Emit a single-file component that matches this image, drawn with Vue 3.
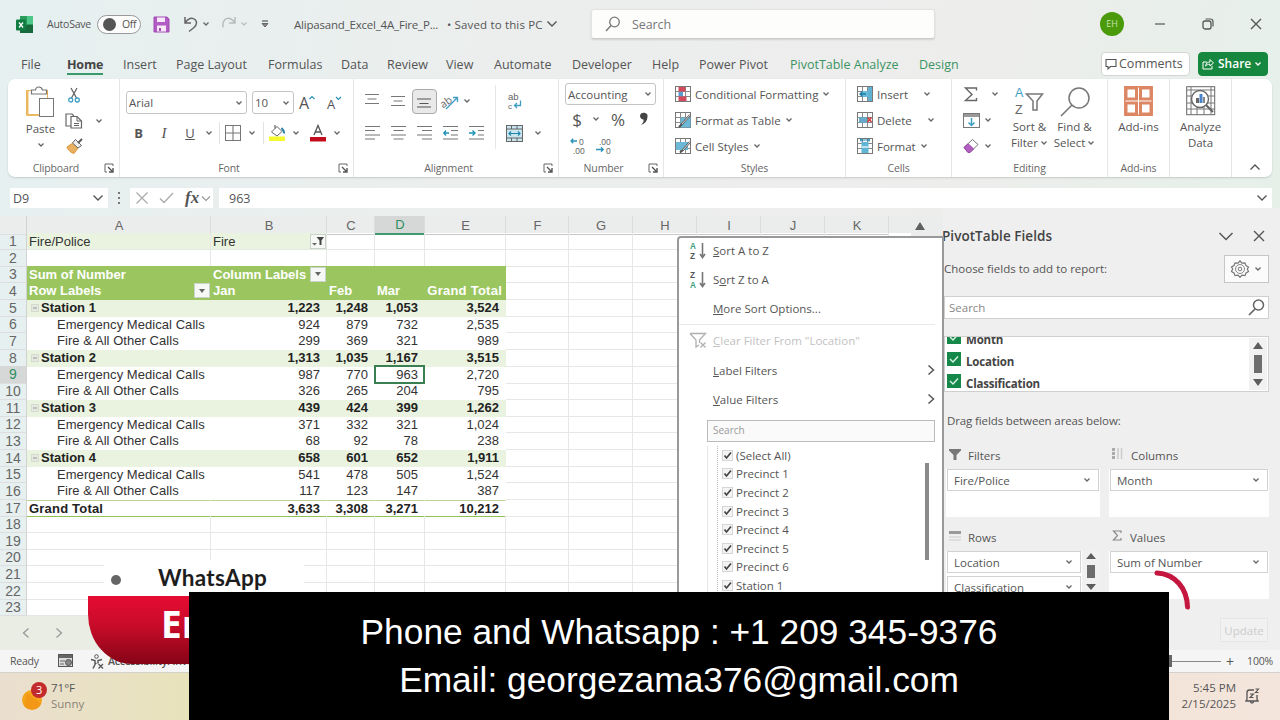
<template>
  <div class="window">
    <!-- Title bar -->
    <header class="titlebar">
      <Icon name="excel" />
      <span class="autosave">AutoSave</span>
      <span class="toggle"><i class="knob"></i>Off</span>
      <Icon name="save" />
      <Icon name="undo" />
      <Icon name="caret" class="center" />
      <Icon name="redo" class="redo" />
      <Icon name="caret" class="center faded" />
      <Icon name="more" class="center" />
      <span class="filename">Alipasand_Excel_4A_Fire_P...</span>
      <span class="saved">• Saved to this PC</span>
      <Icon name="chevron" class="center" />
      <div class="title-search"><Icon name="lens" />Search</div>
      <span class="avatar">EH</span>
      <Icon name="minimize" class="center" />
      <Icon name="restore" class="center" />
      <Icon name="close" class="center" />
    </header>

    <!-- Ribbon tabs -->
    <nav class="tabs">
      <a
        v-for="tab in tabs"
        :key="tab"
        class="tab"
        :class="{ active: tab === 'Home', context: contextTabs.includes(tab) }"
      ><span>{{ tab }}</span></a>
      <div class="tab-actions">
        <button class="comments"><Icon name="comment" />Comments</button>
        <button class="share"><Icon name="share" />Share<Icon name="caretWhite" /></button>
      </div>
    </nav>

    <!-- Ribbon -->
    <section class="ribbon">
      <div class="group g-clipboard">
        <div class="body clipboard">
          <div class="big paste">
            <Icon name="paste" />
            <span>Paste</span>
            <Icon name="caret" />
          </div>
          <div class="stack">
            <Icon name="cut" />
            <Icon name="copy" />
            <Icon name="brush" />
          </div>
          <Icon name="caret" class="copy-caret" />
        </div>
        <div class="label"><span>Clipboard</span><Icon name="launcher" /></div>
      </div>

      <div class="group g-font">
        <div class="body font">
          <div class="font-pick">
            <span class="combo">Arial<Icon name="caret" /></span>
            <span class="combo">10<Icon name="caret" /></span>
            <Icon name="grow" />
            <Icon name="shrink" />
          </div>
          <div class="font-tools">
            <b>B</b>
            <i class="italic">I</i>
            <u>U</u>
            <Icon name="caret" />
            <span class="sep"></span>
            <Icon name="borders" />
            <Icon name="caret" />
            <span class="sep"></span>
            <Icon name="fill" />
            <Icon name="caret" />
            <Icon name="fontColor" />
            <Icon name="caret" />
          </div>
        </div>
        <div class="label"><span>Font</span><Icon name="launcher" /></div>
      </div>

      <div class="group g-align">
        <div class="body align">
          <div class="align-grid">
            <Icon name="vTop" />
            <Icon name="vMid" />
            <span class="pressed"><Icon name="vBottom" /></span>
            <Icon name="orient" />
            <Icon name="caret" class="orient-caret" />
            <Icon name="hLeft" />
            <Icon name="hCenter" />
            <Icon name="hRight" />
            <Icon name="outdent" />
            <Icon name="indent" />
          </div>
          <div class="wrap-grid">
            <Icon name="wrap" />
            <span></span>
            <Icon name="merge" />
            <Icon name="caret" />
          </div>
        </div>
        <div class="label"><span>Alignment</span><Icon name="launcher" /></div>
      </div>

      <div class="group g-number">
        <div class="body number">
          <span class="combo small">Accounting<Icon name="caret" /></span>
          <div class="number-row">
            <span class="sign">$</span>
            <Icon name="caret" />
            <span class="sign">%</span>
            <Icon name="comma" />
          </div>
          <div class="number-row decimals">
            <Icon name="incDec" />
            <Icon name="decDec" />
          </div>
        </div>
        <div class="label"><span>Number</span><Icon name="launcher" /></div>
      </div>

      <div class="group g-styles">
        <div class="body list">
          <div v-for="item in styleItems" :key="item.text" class="list-row">
            <Icon :name="item.icon" /><span>{{ item.text }}</span><Icon name="caret" />
          </div>
        </div>
        <div class="label plain"><span>Styles</span></div>
      </div>

      <div class="group g-cells">
        <div class="body list">
          <div v-for="item in cellItems" :key="item.text" class="list-row" :class="item.icon">
            <Icon :name="item.icon" /><span>{{ item.text }}</span><Icon name="caret" />
          </div>
        </div>
        <div class="label plain"><span>Cells</span></div>
      </div>

      <div class="group g-editing">
        <div class="body editing">
          <div class="edit-tools">
            <Icon name="sigma" /><Icon name="caret" class="wide-caret" />
            <Icon name="fillDown" /><Icon name="caret" />
            <Icon name="eraser" /><Icon name="caret" />
          </div>
          <div class="big sort">
            <Icon name="sortFilter" />
            <span>Sort &amp;</span>
            <span>Filter<Icon name="caret" /></span>
          </div>
          <div class="big find">
            <Icon name="find" />
            <span>Find &amp;</span>
            <span>Select<Icon name="caret" /></span>
          </div>
        </div>
        <div class="label plain"><span>Editing</span></div>
      </div>

      <div class="group g-addins">
        <div class="body"><div class="big"><Icon name="addins" /><span>Add-ins</span></div></div>
        <div class="label plain"><span>Add-ins</span></div>
      </div>

      <div class="group g-analyze">
        <div class="body"><div class="big"><Icon name="analyze" /><span>Analyze</span><span>Data</span></div></div>
      </div>
      <Icon name="collapse" class="collapse" />
    </section>

    <!-- Formula bar -->
    <section class="formula-bar">
      <div class="name-box">D9<Icon name="chevron" /></div>
      <Icon name="dots" class="center" />
      <div class="fx-box">
        <Icon name="cancel" />
        <Icon name="check" />
        <em>fx</em>
        <Icon name="chevronLight" />
      </div>
      <div class="formula">963<Icon name="chevron" /></div>
    </section>

    <!-- Worksheet and field pane -->
    <main class="work">
      <div class="sheet">
        <div class="row head">
          <span class="rownum"></span>
          <span v-for="c in columns" :key="c" class="cell" :class="{ selected: c === 'D' }">{{ c }}</span>
          <span class="scroll-up"><Icon name="arrowUp" /></span>
        </div>
        <div v-for="(row, n) in rows" :key="n" class="row" :class="row.kind">
          <span class="rownum" :class="{ selected: n === 8 }">{{ n + 1 }}</span>
          <span
            v-for="(c, i) in columns"
            :key="c"
            class="cell"
            :class="[c, { pivot: i < 5, cursor: n === 8 && c === 'D' }]"
          ><Icon v-if="row.kind === 'station' && i === 0" name="collapseBox" />{{ row.cells[i] }}<span
            v-if="row.drop === c" class="drop"
          ><Icon :name="n === 0 ? 'filterOn' : 'dropArrow'" /></span></span>
        </div>
        <div class="promo">
          <span class="promo-dot"></span>WhatsApp
        </div>
      </div>

      <aside class="pane">
        <div class="pane-title">
          <h2>PivotTable Fields</h2><Icon name="chevronBig" /><Icon name="close" />
        </div>
        <div class="pane-choose">
          <span>Choose fields to add to report:</span>
          <button><Icon name="gear" /><Icon name="caret" /></button>
        </div>
        <div class="pane-search">Search<Icon name="lensDark" /></div>
        <div class="fields">
          <ul>
            <li v-for="f in fields" :key="f"><Icon name="checked" />{{ f }}</li>
          </ul>
          <Icon name="scrollTall" />
        </div>
        <p class="drag">Drag fields between areas below:</p>
        <div class="areas">
          <div v-for="area in areas" :key="area.title" class="area">
            <h3><Icon :name="area.icon" />{{ area.title }}</h3>
            <div class="drop-zone">
              <div class="chips">
                <div v-for="item in area.items" :key="item" class="chip">{{ item }}<Icon name="caret" /></div>
              </div>
              <Icon v-if="area.items.length > 1" name="scrollShort" />
            </div>
          </div>
        </div>
      </aside>
    </main>

    <footer class="sheet-tabs">
      <Icon name="prev" />
      <Icon name="next" />
      <button class="update">Update</button>
    </footer>

    <footer class="status">
      <span class="ready">Ready</span>
      <Icon name="macro" />
      <Icon name="access" />
      <span class="access-text">Accessibility: Investigate</span>
      <span class="zoom"><i class="thumb"></i><i class="track"></i><b>+</b>100%</span>
    </footer>

    <footer class="taskbar">
      <Icon name="weather" />
      <div class="weather"><span>71°F</span><span>Sunny</span></div>
      <div class="clock"><span>5:45 PM</span><span>2/15/2025</span></div>
      <Icon name="bell" />
    </footer>

    <!-- Filter drop-down -->
    <div class="menu">
      <div v-for="m in menuItems" :key="m.rest" class="menu-item" :class="m.cls">
        <span class="menu-icon"><Icon v-if="m.icon" :name="m.icon" /></span>
        <span class="menu-text">{{ m.pre }}<u>{{ m.key }}</u>{{ m.rest }}</span>
        <Icon v-if="m.sub" name="right" />
      </div>
      <div class="menu-search">Search</div>
      <div class="menu-list">
        <div class="tree">
          <div v-for="c in choices" :key="c" class="choice"><Icon name="tick" />{{ c }}</div>
        </div>
        <span class="menu-scroll"></span>
      </div>
    </div>

    <!-- Video overlays -->
    <div class="banner">Er</div>
    <Icon name="arc" class="arc" />
    <div class="contact">
      <p>Phone and Whatsapp : +1 209 345-9376</p>
      <p>Email: georgezama376@gmail.com</p>
    </div>
  </div>
</template>

<script setup>
import { h } from 'vue'

const line = (d, color = '#666', w = 1.2) =>
  `<path d="${d}" fill="none" stroke="${color}" stroke-width="${w}"/>`
const rect = (x, y, w, hh, fill, stroke = 'none') =>
  `<rect x="${x}" y="${y}" width="${w}" height="${hh}" fill="${fill}" stroke="${stroke}"/>`
const text = (x, y, size, fill, str, font = 'Open Sans', weight = 400) =>
  `<text x="${x}" y="${y}" font-size="${size}" fill="${fill}" font-family="${font}" font-weight="${weight}">${str}</text>`
const gridIcon = rect(0.5, 0.5, 15, 15, '#fff', '#777') + line('M.5 5.5h15M.5 10.5h15M5.5 .5v15M10.5 .5v15', '#888', 1)
const downArrow = line('M13.5 1v14M11 12l2.5 3.500L16 12', '#777', 1.6)

// name: [width, height, markup]
const icons = {
  excel: [17, 17, rect(4, 0, 13, 17, '#2a9d5c') + rect(11, 0, 6, 8, '#4cc788') + rect(4, 9, 13, 8, '#17693c') + '<rect x="0" y="3.5" width="10" height="11" rx="1" fill="#107c41"/>' + line('M3 6.5l4 5M7 6.5l-4 5', '#fff', 1.3)],
  save: [17, 17, '<path d="M1 1h13l2 2v13H1z" fill="#b35bc4" stroke="#a14bb3"/>' + rect(4, 1.5, 8, 4.5, '#f7e9fa') + rect(4, 9.5, 9, 6, '#f7e9fa') + rect(6, 12, 2, 3, '#a14bb3')],
  undo: [18, 18, line('M3 2v6h6M3 8C6 3 10 2 13 4.5c3 3 1 6-1 8L7 16.5', '#666', 1.5)],
  redo: [18, 18, line('M15 2v6h-6M15 8C12 3 8 2 5 4.5c-3 3-2 5.5-2 8', '#b9bcbc', 1.5)],
  caret: [8, 6, line('M1.5 1.5L4 4l2.5-2.5', '#666', 1.3)],
  caretWhite: [8, 6, line('M1.5 1.5L4 4l2.5-2.5', '#fff', 1.3)],
  more: [8, 8, line('M1 1h6', '#666', 1.3) + '<path d="M1 3.5h6L4 7z" fill="#888" stroke="#666"/>'],
  chevron: [12, 8, line('M1.5 1.5L6 6l4.5-4.5', '#555', 1.4)],
  chevronLight: [10, 7, line('M1 1.5L5 5.5l4-4', '#999', 1.2)],
  chevronBig: [16, 9, line('M1.5 1L8 7.5 14.5 1', '#555', 1.5)],
  lens: [16, 16, '<circle cx="9.5" cy="6" r="4.8" fill="none" stroke="#777" stroke-width="1.3"/>' + line('M6 9.5L1 15', '#777', 1.4)],
  lensDark: [17, 17, '<circle cx="10.5" cy="6" r="5" fill="none" stroke="#666" stroke-width="1.5"/>' + line('M7 10L1 16', '#666', 1.7)],
  minimize: [12, 12, line('M1 6h10', '#555', 1.2)],
  restore: [12, 12, '<rect x="1" y="3" width="8" height="8" rx="2" fill="none" stroke="#555" stroke-width="1.3"/>' + line('M3.5 1h5a2.5 2.5 0 0 1 2.5 2.5V8.5', '#555', 1.2)],
  close: [12, 12, line('M1 1l10 10M11 1L1 11', '#555', 1.4)],
  comment: [12, 12, line('M1 1.5h10v7H5.5L3 11V8.5H1z', '#555', 1.1)],
  share: [12, 12, line('M5 4H1v7h9V8M3.5 8C4 5 6 4 8 4V1.5l3.5 3.5L8 8V6.2C6 6.2 4.5 7 3.5 8z', '#fff', 1)],
  paste: [31, 32, rect(1.5, 4.5, 21, 24, '#fff', '#e9b254') + line('M2.5 4v25h20', '#edb963', 2) + '<path d="M6.5 8V4h4c.5-4 6-4 7 0h4v4z" fill="#fff" stroke="#777" stroke-width="1.2"/>' + rect(14.5, 12.5, 14, 18, '#fff', '#777')],
  cut: [12, 16, line('M3 1l5.5 10M9 1L3.5 11', '#666', 1.3) + '<circle cx="2.7" cy="13" r="2" fill="none" stroke="#3d9ec2" stroke-width="1.3"/><circle cx="9.3" cy="13" r="2" fill="none" stroke="#3d9ec2" stroke-width="1.3"/>'],
  copy: [18, 16, line('M6 13H1V1h6l2 2', '#666', 1.2) + '<path d="M6 3.5h6l4.5 4.5v7H6z" fill="#fff" stroke="#666" stroke-width="1.2"/>' + line('M12 3.5V8h4.5M9 10.5h5M9 12.5h5', '#666', 1)],
  brush: [17, 16, '<path d="M1 9l6-4 5 5-4 5.5C5 15 2 12 1 9z" fill="#eab061" stroke="#d99437"/><path d="M6.5 5l3-3.5 6 6L12 10z" fill="#eee" stroke="#666"/>' + line('M12 5l4-4', '#555', 1.8)],
  launcher: [10, 10, line('M9 3V1H1v8h2', '#666', 1) + line('M4 4l5 5M9 5v4H5', '#555', 1.4)],
  grow: [16, 18, text(0, 15, 16, '#555', 'A') + line('M10.5 5L13 2.5 15.5 5', '#2b93b8', 1.2)],
  shrink: [15, 18, text(1, 15, 13, '#555', 'A') + line('M10 3l2.5 2.5L15 3', '#2b93b8', 1.2)],
  borders: [16, 16, rect(0.5, 0.5, 15, 15, 'none', '#777') + line('M8 1v14M1 8h14', '#777', 1.1)],
  fill: [17, 18, rect(0, 12.5, 16, 4.5, '#f4fa2e') + '<path d="M2.5 8L8 2.5 13 7.5 8 12z" fill="#fff" stroke="#666"/>' + line('M6 4.5V1', '#666') + '<path d="M12.5 4c2 2 3 3.5 2.5 5.5" fill="none" stroke="#2b7fa8" stroke-width="1.8"/>'],
  fontColor: [16, 18, rect(0, 13, 16, 4.5, '#c20d1f') + line('M4 11L8 1.5 12 11M5.3 8h5.4', '#555', 1.3)],
  vTop: [14, 14, line('M0 .5h14M2.5 5h9M0 9.5h14', '#777', 1.1)],
  vMid: [14, 14, line('M0 2.5h14M2.500 7h9M0 11.500h14', '#777', 1.1)],
  vBottom: [14, 14, line('M0 5h14M2.5 9.5h9M0 13h14', '#555', 1.1)],
  hLeft: [15, 16, line('M0 1.5h15M0 5.5h10M0 10h15M0 14h10', '#777', 1.1)],
  hCenter: [15, 16, line('M0 1.5h15M2.5 5.5h10M0 10h15M2.5 14h10', '#777', 1.1)],
  hRight: [15, 16, line('M0 1.5h15M5 5.5h10M0 10h15M5 14h10', '#777', 1.1)],
  outdent: [15, 16, line('M0 1.5h15M8 5.5h7M8 10h7M0 14h15', '#777', 1.1) + line('M6 8H1M3 5.5L.8 8 3 10.5', '#1f93b8', 1.4)],
  indent: [15, 16, line('M0 1.5h15M9 5.5h6M9 10h6M0 14h15', '#777', 1.1) + line('M0 8h5.5M3.5 5.5L6 8l-2.5 2.5', '#1f93b8', 1.4)],
  orient: [17, 17, '<text x="-2" y="12" font-size="10.5" fill="#666" font-family="Open Sans" transform="rotate(-35 5 9)">ab</text>' + line('M4 16L15 5M11 4.5h4.500V9', '#3d9ec2', 1.3)],
  wrap: [15, 18, text(1, 7.5, 9.5, '#666', 'ab', 'Liberation Sans') + text(1, 17, 8, '#666', 'c', 'Liberation Sans') + line('M13.5 8.500v5H8M10 11L7.500 13.500l2.5 2.5', '#3d9ec2', 1.3)],
  merge: [17, 17, rect(0.5, 0.5, 16, 16, '#c9e6f0', '#666') + line('M.5 4h16M.5 13h16M5.5 .5V4M11 .5V4M5.5 13v3.5M11 13v3.5', '#666', 1) + line('M3 8.5h11M5 6.5L3 8.5l2 2M12 6.5l2 2-2 2', '#1f86aa', 1.2)],
  comma: [10, 14, '<path d="M1 4a3.7 3.7 0 1 1 7.5 1C8.3 9 6 11.5 2 13c2-2 3-3.5 2.5-5.5C2.5 7.3 1 6 1 4z" fill="#444"/>'],
  incDec: [16, 17, text(9, 7.500, 8.500, '#666', '0', 'Liberation Sans') + text(3, 17, 8.500, '#666', '.00', 'Liberation Sans') + line('M7 4H1M3.2 1.7L1 4l2.2 2.3', '#2b93b8', 1.3)],
  decDec: [16, 17, text(3, 7.500, 8.500, '#666', '.00', 'Liberation Sans') + text(10, 17, 8.500, '#666', '0', 'Liberation Sans') + line('M0 12.500h7M5 10.200L7.2 12.500 5 14.800', '#2b93b8', 1.3)],
  condFmt: [16, 16, gridIcon + rect(3.5, 1, 7, 4.5, '#d2495b') + rect(3.5, 6, 4.5, 4, '#5b9bd0') + rect(3.5, 10.5, 8, 4.5, '#d2495b')],
  fmtTable: [16, 16, gridIcon + rect(5.5, 5.5, 10, 10, '#6cb8d6') + line('M15 3L7 12l-3 3', '#555', 2) + line('M15 3L7 12', '#fff', 0.8)],
  cellStyle: [16, 16, gridIcon + rect(1, 4, 12, 8, '#6cb8d6') + line('M15 4L8 12l-3 2.5', '#555', 2) + line('M15 4L8 12', '#fff', 0.8)],
  insert: [16, 16, gridIcon + rect(5, 5, 8, 6, '#69bdda') + rect(11, 1, 4, 14, '#5fb2d1') + line('M9 8H3M5.5 5.5L3 8l2.5 2.5', '#1c7ba1', 1.3)],
  delete: [16, 16, gridIcon + rect(2, 5, 8, 6, '#69aac9') + line('M10.5 5.5l4 4.5M14.5 5.5l-4 4.5', '#cc3a3a', 1.5)],
  format: [16, 16, gridIcon + rect(4.5, 4, 7, 11, '#5fb5d5') + line('M3 2h10M4 .5v3M12 .5v3', '#1c86ad', 1.2) + line('M5 9h6', '#fff', 1.2)],
  sigma: [14, 15, line('M12.5 3.5V1H1.5L8 7.5l-6.5 6h11V11', '#666', 1.4)],
  fillDown: [17, 15, rect(0.5, 0.5, 16, 14, '#fff', '#777') + rect(1, 1, 15, 3, '#999') + line('M8.5 5v7M5.5 9.5l3 3 3-3', '#3d9ec2', 1.5)],
  eraser: [17, 16, '<path d="M1 9.5L9.5 1.5l5.5 5L7 14.5H5z" fill="#fff" stroke="#777"/><path d="M1 9.5l4-3.7 5.5 5L7 14.5H5z" fill="#b35fc2" stroke="#9c46ad"/>'],
  sortFilter: [31, 30, text(1, 11, 12.5, '#3d9ec2', 'A', 'Liberation Sans') + text(1, 27.5, 12.5, '#666', 'Z', 'Liberation Sans') + line('M12.500 8h16l-5.5 7v9h-4v-9z', '#777', 1.5)],
  find: [30, 31, '<circle cx="19" cy="12" r="10" fill="none" stroke="#777" stroke-width="1.5"/>' + line('M12 19L1 30', '#777', 1.6)],
  addins: [29, 30, [[1, 1], [15.5, 1], [1, 16], [15.5, 16]].map(([x, y]) => `<rect x="${x + 1}" y="${y + 1}" width="10.5" height="11" fill="#fff" stroke="#dd8663" stroke-width="3"/>`).join('') + line('M.8 .8h27.4v28.4H.8z', '#dd8663', 1.4)],
  analyze: [30, 30, rect(0.7, 0.7, 28, 28, '#fff', '#666') + line('M1 4h28M1 10h28M1 17h28M1 23h28M5 1v28M11 20v9M18 20v9M25 1v28', '#777', 1) + '<circle cx="14" cy="13" r="8.5" fill="#fff" stroke="#666" stroke-width="1.4"/>' + rect(10, 12, 3, 5, '#666') + rect(13.5, 8, 3, 9, '#4a83c9') + rect(17, 11, 2, 6, '#888') + line('M20 19l7 7', '#666', 2.2)],
  collapse: [12, 8, line('M1.5 6.5L6 2l4.5 4.5', '#555', 1.4)],
  dots: [4, 14, rect(1, 1, 2, 2, '#777') + rect(1, 6, 2, 2, '#777') + rect(1, 11, 2, 2, '#777')],
  cancel: [12, 12, line('M.5 .5l11 11M11.5 .5l-11 11', '#aaa', 1.2)],
  check: [15, 12, line('M1 6.5l4 4L14 1', '#aaa', 1.3)],
  arrowUp: [10, 8, '<path d="M5 0l5 8H0z" fill="#606060"/>'],
  collapseBox: [8, 8, rect(0.5, 0.5, 7, 7, '#e4e8e0', '#d5dccf') + line('M2 4h4', '#999', 1)],
  filterOn: [12, 10, '<path d="M4.5 1H12L9.5 4.5V9H7.5V4.5z" fill="#444"/><path d="M0 7h5L2.5 9.5z" fill="#666"/>'],
  dropArrow: [8, 6, '<path d="M1 1h6L4 5z" fill="#666"/>'],
  gear: [18, 18, '<path d="M9 1l2 2.2 3-.4 1 2.8 2.5 1.500L16.3 9l1.2 2.5L15 13l-1 2.6-3-.4L9 17.3l-2-2.1-3 .4L3 13 .5 11.5 1.7 9 .5 7 3 5.5l1-2.7 3 .4z" fill="none" stroke="#777" stroke-width="1.2"/><circle cx="9" cy="9" r="4.5" fill="none" stroke="#888"/><circle cx="9" cy="9" r="1.8" fill="none" stroke="#777"/>'],
  checked: [14, 14, rect(0, 0, 14, 14, '#16884a') + line('M3 7l3 3 5-5.5', '#d8f5e4', 1.4)],
  scrollTall: [18, 52, rect(0, 0, 18, 52, '#f1f1f1') + '<path d="M9 4l5 7H4zM9 48l5-7H4z" fill="#5d5d5d"/>' + rect(5, 17, 8, 18, '#6d6d6d')],
  scrollShort: [18, 42, rect(0, 0, 18, 48, '#f1f1f1') + '<path d="M9 2l5 6H4zM9 39l5-6H4z" fill="#5d5d5d"/>' + rect(5, 14, 8, 13, '#6d6d6d')],
  filters: [12, 12, '<path d="M0 1h12v1.5L7.5 7v5h-3V7L0 2.5z" fill="#777"/>'],
  columns: [12, 12, rect(0, 0, 3, 3, '#aaa') + rect(0, 4, 3, 3, '#aaa') + rect(0, 8, 3, 3, '#aaa') + line('M6 0v11M9.5 0v11', '#ccc', 1.5)],
  rowsIcon: [12, 12, rect(0, 1, 12, 3, '#999') + line('M0 7h12M0 10h12', '#ccc', 1)],
  values: [11, 12, line('M9 3V1H1.5l4 4.5-4 4.5H9V8', '#888', 1.2)],
  prev: [8, 12, line('M6.5 1.5L1.5 6l5 4.5', '#999', 1.3)],
  next: [8, 12, line('M1.5 1.5l5 4.5-5 4.5', '#999', 1.3)],
  right: [8, 12, line('M1.5 1.5L6.5 6l-5 4.5', '#555', 1.5)],
  macro: [15, 14, rect(0.5, 0.5, 14, 12, '#ddd', '#555') + rect(1, 1, 13, 3, '#666') + line('M2 7h5M2 10h4', '#666', 1.2) + '<circle cx="10.5" cy="8.5" r="3" fill="#888" stroke="#555"/>'],
  access: [15, 15, '<circle cx="6.5" cy="2.5" r="1.8" fill="none" stroke="#555"/>' + line('M1 5.5l4 1v4l-2 4M12 5.5l-4 1v3M5 10l1.5-1', '#555', 1.4) + line('M8.5 10l4.5 4.5M13 10l-4.5 4.5', '#555', 1.3)],
  weather: [26, 30, '<circle cx="10" cy="19" r="10" fill="#f5a41c"/><path d="M2 25a10 10 0 0 0 17-2L5 12z" fill="#f0860f" opacity=".4"/><circle cx="17" cy="9" r="8" fill="#c22a2c"/>' + text(14, 13, 11, '#fff', '3')],
  bell: [15, 16, line('M9 2H4.5A2.5 2.5 0 0 0 2 4.500V11L1 13h12l-1-2V7M5.5 13.5c0 2 3 2 3 0', '#555', 1.3) + line('M5 6h3.5L5 9.5h3.5M10.5 1h3L10.5 4.5h3', '#555', 1.1)],
  sortAZ: [18, 18, text(1, 7, 8.2, '#3f9f7f', 'A', 'Liberation Sans', 700) + text(1, 17, 8.2, '#555', 'Z', 'Liberation Sans', 700) + downArrow],
  sortZA: [18, 18, text(1, 7, 8.2, '#555', 'Z', 'Liberation Sans', 700) + text(1, 17, 8.2, '#3f9f7f', 'A', 'Liberation Sans', 700) + downArrow],
  clearFilter: [18, 17, line('M1 1.5h15.5l-6 6.5v3M1 1.5L7 8v7l3-2', '#b0b0b0', 1.3) + line('M11.5 10.5l5 5M16.5 10.5l-5 5', '#b0b0b0', 1.3)],
  tick: [11, 11, rect(0.5, 0.5, 10, 10, '#f4f4f4', '#d6d6d6') + line('M2.5 5.5l2 2.5 4.5-5.5', '#444', 1.7)],
  arc: [40, 42, '<path d="M4 4C22 5 34 19 34.5 38" fill="none" stroke="#c4163e" stroke-width="5" stroke-linecap="round"/>']
}

const Icon = (props) => {
  const [w, hh, body] = icons[props.name]
  return h('svg', { width: w, height: hh, viewBox: `0 0 ${w} ${hh}`, innerHTML: body })
}
Icon.props = ['name']

const tabs = [
  'File', 'Home', 'Insert', 'Page Layout', 'Formulas', 'Data', 'Review', 'View',
  'Automate', 'Developer', 'Help', 'Power Pivot', 'PivotTable Analyze', 'Design'
]
const contextTabs = ['PivotTable Analyze', 'Design']

const styleItems = [
  { icon: 'condFmt', text: 'Conditional Formatting' },
  { icon: 'fmtTable', text: 'Format as Table' },
  { icon: 'cellStyle', text: 'Cell Styles' }
]
const cellItems = [
  { icon: 'insert', text: 'Insert' },
  { icon: 'delete', text: 'Delete' },
  { icon: 'format', text: 'Format' }
]

const columns = ['A', 'B', 'C', 'D', 'E', 'F', 'G', 'H', 'I', 'J', 'K']
const calls = 'Emergency Medical Calls'
const other = 'Fire & All Other Calls'
const rows = [
  { kind: 'page', cells: ['Fire/Police', 'Fire'], drop: 'B' },
  { kind: '', cells: [] },
  { kind: 'title', cells: ['Sum of Number', 'Column Labels'], drop: 'B' },
  { kind: 'title', cells: ['Row Labels', 'Jan', 'Feb', 'Mar', 'Grand Total'], drop: 'A' },
  { kind: 'station', cells: ['Station 1', '1,223', '1,248', '1,053', '3,524'] },
  { kind: 'detail', cells: [calls, '924', '879', '732', '2,535'] },
  { kind: 'detail', cells: [other, '299', '369', '321', '989'] },
  { kind: 'station', cells: ['Station 2', '1,313', '1,035', '1,167', '3,515'] },
  { kind: 'detail', cells: [calls, '987', '770', '963', '2,720'] },
  { kind: 'detail', cells: [other, '326', '265', '204', '795'] },
  { kind: 'station', cells: ['Station 3', '439', '424', '399', '1,262'] },
  { kind: 'detail', cells: [calls, '371', '332', '321', '1,024'] },
  { kind: 'detail', cells: [other, '68', '92', '78', '238'] },
  { kind: 'station', cells: ['Station 4', '658', '601', '652', '1,911'] },
  { kind: 'detail', cells: [calls, '541', '478', '505', '1,524'] },
  { kind: 'detail', cells: [other, '117', '123', '147', '387'] },
  { kind: 'total', cells: ['Grand Total', '3,633', '3,308', '3,271', '10,212'] },
  ...Array.from({ length: 6 }, () => ({ kind: '', cells: [] }))
]

const fields = ['Month', 'Location', 'Classification']
const areas = [
  { title: 'Filters', icon: 'filters', items: ['Fire/Police'] },
  { title: 'Columns', icon: 'columns', items: ['Month'] },
  { title: 'Rows', icon: 'rowsIcon', items: ['Location', 'Classification'] },
  { title: 'Values', icon: 'values', items: ['Sum of Number'] }
]

const menuItems = [
  { icon: 'sortAZ', pre: '', key: 'S', rest: 'ort A to Z' },
  { icon: 'sortZA', pre: 'S', key: 'o', rest: 'rt Z to A' },
  { pre: '', key: 'M', rest: 'ore Sort Options...' },
  { icon: 'clearFilter', pre: '', key: 'C', rest: 'lear Filter From "Location"', cls: 'disabled' },
  { pre: '', key: 'L', rest: 'abel Filters', sub: true },
  { pre: '', key: 'V', rest: 'alue Filters', sub: true }
]
const choices = [
  '(Select All)', 'Precinct 1', 'Precinct 2', 'Precinct 3', 'Precinct 4',
  'Precinct 5', 'Precinct 6', 'Station 1'
]
</script>

<style>
body {
  overflow: hidden;
}
</style>

<style scoped>
* {
  box-sizing: border-box;
}

.window {
  position: relative;
  width: 1280px;
  height: 720px;
  overflow: hidden;
  display: flex;
  flex-direction: column;
  font-family: 'Open Sans', 'Noto Sans', sans-serif;
  font-size: 11.5px;
  color: #555;
  background: linear-gradient(100deg, #e6f0f0 0%, #ebeeed 35%, #ededec 70%, #e4f1e9 100%);
}

svg {
  display: block;
  flex: none;
  overflow: visible;
}

button {
  font: inherit;
  color: inherit;
  padding: 0;
}

.center {
  justify-self: center;
}

/* Title bar */
.titlebar {
  height: 48px;
  flex: none;
  display: grid;
  grid-template-columns: 31px 50px 56px 29px 17px 14px 27px 8px 34px 165px 97px 16px 540px 24px 72px 24px 72px;
  padding: 0 0 0 16px;
  align-items: center;
  white-space: nowrap;
}

.autosave {
  font-size: 10.5px;
  letter-spacing: -0.25px;
}

.toggle {
  display: flex;
  align-items: center;
  gap: 6px;
  width: 44px;
  height: 19px;
  padding-left: 5px;
  border: 1px solid #999;
  border-radius: 10px;
  background: #fcfcfc;
  font-size: 10.5px;
  letter-spacing: -0.4px;
}

.knob {
  width: 13px;
  height: 13px;
  border-radius: 50%;
  background: #555;
}

.redo {
  margin-left: 7px;
}

.faded {
  opacity: 0.35;
}

.filename {
  padding-left: 12px;
  letter-spacing: -0.2px;
}

.saved {
  letter-spacing: 0.15px;
}

.title-search {
  display: flex;
  align-items: center;
  gap: 11px;
  width: 344px;
  height: 30px;
  margin-left: 31px;
  padding-left: 13px;
  background: #fdfdfc;
  border: 1px solid #e3e3e3;
  border-bottom-color: #ccc;
  border-radius: 3px;
  font-size: 12.5px;
  letter-spacing: -0.1px;
  color: #777;
  box-shadow: 0 1px 2px rgba(0, 0, 0, 0.12);
}

.avatar {
  width: 24px;
  height: 24px;
  border-radius: 50%;
  background: #4a9a0c;
  color: #c5e3ac;
  font-size: 9px;
  line-height: 24px;
  text-align: center;
}

/* Tabs */
.tabs {
  height: 32px;
  flex: none;
  display: grid;
  grid-template-columns: 46px 56px 53px 92px 73px 46px 59px 48px 78px 80px 47px 91px 129px 60px 1fr;
  padding: 0 12px 0 21px;
  align-items: center;
  font-size: 12.5px;
  white-space: nowrap;
}

.tab {
  height: 100%;
  line-height: 33px;
}

.tab span {
  display: inline-block;
  height: 27px;
}

.tab.active span {
  font-weight: 700;
  letter-spacing: -0.2px;
  color: #444;
  border-bottom: 2px solid #3a9b6a;
}

.tab.context {
  color: #3c9463;
}

.tab-actions {
  display: flex;
  justify-content: flex-end;
  gap: 8px;
}

.comments,
.share {
  display: flex;
  align-items: center;
  height: 24px;
  border: 1px solid #d4d4d4;
  border-radius: 4px;
  background: #fff;
  gap: 2px;
  padding-left: 3px;
  width: 89px;
  margin-top: -2px;
  font-size: 12.5px;
}

.share {
  width: 70px;
  background: #16873f;
  border-color: #16873f;
  color: #fff;
  font-weight: 600;
  font-size: 12px;
  gap: 4px;
}

.share svg:last-child {
  margin-left: -1px;
}

/* Ribbon */
.ribbon {
  height: 98px;
  flex: none;
  display: flex;
  margin: -1px 8px 0 8px;
  background: #fff;
  border-radius: 7px;
  box-shadow: 0 1px 2px rgba(0, 0, 0, 0.15);
  white-space: nowrap;
}

.group {
  display: flex;
  flex-direction: column;
  flex: none;
  border-right: 1px solid #e6e6e6;
}

.g-clipboard { width: 112px; }
.g-font { width: 234px; }
.g-align { width: 205px; }
.g-number { width: 105px; }
.g-styles { width: 182px; }
.g-cells { width: 106px; }
.g-editing { width: 156px; }
.g-addins { width: 62px; }
.g-analyze { width: 62px; }

.body {
  height: 79px;
}

.label {
  display: flex;
  align-items: center;
  height: 19px;
  padding-right: 5px;
  font-size: 10.5px;
  letter-spacing: -0.15px;
  color: #666;
}

.label.plain {
  padding-right: 0;
}

.label span {
  flex: 1;
  text-align: center;
}

.big {
  display: flex;
  flex-direction: column;
  align-items: center;
  padding-top: 7px;
  line-height: 16px;
  font-size: 11.5px;
}

.big > svg {
  margin-bottom: 3px;
}

.find > svg {
  margin-bottom: 2px;
}

.big span {
  display: flex;
  align-items: center;
  gap: 2px;
}

.clipboard {
  display: grid;
  grid-template-columns: 37px 28px 20px;
  padding-left: 14px;
}

.paste > svg:last-child {
  margin-top: 5px;
}

.stack {
  display: flex;
  flex-direction: column;
  align-items: center;
  justify-content: space-between;
  padding: 8px 0 4px 2px;
}

.copy-caret {
  align-self: center;
  margin: 4px 0 0 8px;
}

.combo {
  display: flex;
  align-items: center;
  justify-content: space-between;
  height: 23px;
  padding: 0 3px 0 2px;
  border: 1px solid #c4c4c4;
  border-radius: 3px;
}

.combo.small {
  height: 22px;
  width: 91px;
}

.font {
  padding: 12px 0 0 6px;
}

.font-pick {
  display: grid;
  grid-template-columns: 121px 42px 16px 16px;
  column-gap: 5px;
  align-items: center;
}

.font-pick > svg:last-child {
  margin-left: 6px;
}

.font-tools {
  display: grid;
  grid-template-columns: 25px 26px 26px 12px 8px 20px 18px 4px 24px 14px 30px 8px;
  height: 22px;
  margin-top: 8px;
  align-items: center;
  justify-items: center;
  font-size: 13px;
}

.italic {
  font-family: 'Liberation Serif', serif;
  font-size: 15px;
}

.sep {
  width: 1px;
  height: 22px;
  background: #e2e2e2;
}

.align {
  display: flex;
  padding: 6px 0 0 5px;
}

.align-grid {
  display: grid;
  grid-template-columns: repeat(5, 26px);
  grid-template-rows: 32px 32px;
  align-items: center;
  justify-items: center;
  width: 137px;
  height: 64px;
  border-right: 1px solid #e6e6e6;
}

.orient-caret {
  margin-right: 18px;
}

.pressed {
  display: flex;
  align-items: center;
  justify-content: center;
  width: 25px;
  height: 25px;
  border: 1px solid #aaa;
  border-radius: 4px;
  background: #e9e9e9;
}

.wrap-grid {
  display: grid;
  grid-template-columns: 36px 12px;
  grid-template-rows: 32px 32px;
  align-items: center;
  justify-items: center;
}

.number {
  padding: 4px 0 0 6px;
}

.number-row {
  display: grid;
  grid-template-columns: 24px 13px 32px 20px;
  height: 28px;
  align-items: center;
  justify-items: center;
}

.number-row.decimals {
  grid-template-columns: 26px 26px;
  height: 24px;
}

.sign {
  font-size: 17px;
}

.list {
  padding: 2px 0 0 11px;
}

.list-row {
  display: flex;
  align-items: center;
  height: 26px;
  gap: 4px;
}

.insert > svg:last-child,
.delete > svg:last-child {
  margin-left: 11px;
}

.editing {
  display: grid;
  grid-template-columns: 48px 45px 45px;
  padding-left: 7px;
}

.edit-tools {
  display: grid;
  grid-template-columns: 24px 10px;
  grid-template-rows: repeat(3, 26px);
  padding-top: 2px;
  align-items: center;
  justify-items: center;
}

.wide-caret {
  margin-left: 14px;
}

.collapse {
  align-self: flex-end;
  margin: 0 0 6px 17px;
}

/* Formula bar */
.formula-bar {
  display: grid;
  grid-template-columns: 98px 22px 84px 1058px;
  height: 31px;
  flex: none;
  padding: 11px 0 0 10px;
  align-items: center;
}

.formula-bar > div {
  display: flex;
  align-items: center;
  height: 20px;
  background: #fff;
}

.name-box,
.formula {
  justify-content: space-between;
  padding: 0 4px 0 3px;
  font-size: 12.5px;
}

.fx-box {
  gap: 11px;
  padding-left: 6px;
  width: 83px;
}

.fx-box svg:last-child {
  margin-left: -9px;
}

.fx-box em {
  font-family: 'Liberation Serif', serif;
  font-size: 17px;
  font-weight: bold;
}

.formula {
  margin-left: 5px;
  padding-left: 10px;
}

/* Worksheet */
.work {
  display: flex;
  height: 408px;
  flex: none;
}

.sheet {
  width: 943px;
  flex: none;
  padding-top: 8px;
  font-family: 'Liberation Sans', Arial, sans-serif;
  position: relative;
}

.row {
  display: grid;
  grid-template-columns: 27px 184px 116px 48px 50px 81px 63px 64px 64px 64px 64px 64px 1fr;
  height: 16.66px;
  background: linear-gradient(90deg, transparent 26px, #fff 26px, #fff 911px, transparent 911px);
}

.row.head {
  height: 17px;
  background: #ebedec;
  font-size: 13px;
  line-height: 17px;
}

.head .cell {
  justify-content: center;
  padding-left: 1px;
  border-right: 1px solid #dcdcdc;
  border-bottom: 1px solid #c8c8c8;
  color: #666;
}

.head .cell.selected {
  background: #d6d8d7;
  color: #2c9062;
  border-bottom: 2px solid #3f9b70;
}

.scroll-up {
  justify-self: center;
  align-self: center;
  margin-left: 8px;
}

.rownum {
  text-align: center;
  color: #666;
  font-size: 14px;
  line-height: 16px;
  border-right: 1px solid #d2d2d2;
  border-bottom: 1px solid #dedede;
}

.rownum.selected {
  background: #d6d8d7;
  color: #2c9062;
}

.cell {
  display: flex;
  align-items: center;
  min-width: 0;
  font-size: 13px;
  white-space: nowrap;
  color: #333;
  border-right: 1px solid #e6e8e6;
  border-bottom: 1px solid #e6e8e6;
}

.row.page .cell,
.row.title .cell {
  padding-left: 2px;
}

.row.page .A,
.row.page .B,
.station .pivot {
  background: #e9f3df;
}

.title .pivot {
  background: #9bc65f;
  border-color: #9bc65f;
  color: #fff;
  font-weight: bold;
}

.title .cell.E {
  justify-content: flex-end;
  padding-right: 3px;
  letter-spacing: 0.25px;
}

.detail .pivot,
.station .pivot,
.total .pivot {
  justify-content: flex-end;
  padding-right: 6px;
  border-color: transparent;
}

.station .pivot,
.total .pivot {
  font-weight: bold;
  color: #222;
}

.station .A,
.detail .A,
.total .A {
  justify-content: flex-start;
}

.station .cell.A {
  padding-left: 4px;
  gap: 2px;
}

.detail .cell.A {
  padding-left: 30px;
  letter-spacing: 0.05px;
}

.total .cell.A {
  padding-left: 2px;
  letter-spacing: 0.2px;
}

.total .pivot {
  border-top: 1px solid #b7d78f;
  border-bottom: 1px solid #8fc153;
}

.detail .cell.cursor {
  border: 2px solid #3a7f4f;
  margin: -1px 0 0 -1px;
  padding-right: 5px;
}

.drop {
  display: flex;
  align-items: center;
  justify-content: center;
  width: 16px;
  height: 15px;
  margin-left: auto;
  background: #f6f8f6;
  border: 1px solid #c9d3c9;
}

/* Label laid over the sheet by the video editor */
.promo {
  position: absolute;
  left: 104px;
  top: 352px;
  display: flex;
  align-items: center;
  width: 200px;
  height: 38px;
  padding: 0 0 3px 7px;
  background: #fff;
  font-family: Lato, sans-serif;
  font-weight: 700;
  font-size: 22.5px;
  letter-spacing: 0.3px;
  color: #1d1d1d;
}

.promo-dot {
  width: 10px;
  height: 10px;
  border-radius: 50%;
  background: #666;
  margin: 5px 37px 0 0;
}

/* Field pane */
.pane {
  width: 337px;
  padding: 9px 11px 0 1px;
  background: #efefef;
}

.pane-title {
  display: flex;
  align-items: center;
  height: 38px;
  padding-right: 4px;
}

.pane-title h2 {
  flex: 1;
  margin: 0 0 0 -2px;
  font-size: 13.5px;
  font-weight: 600;
  letter-spacing: 0.05px;
  color: #444;
}

.pane-title svg:last-child {
  margin-left: 19px;
}

.pane-choose {
  display: flex;
  align-items: center;
  justify-content: space-between;
  height: 27px;
}

.pane-choose button {
  display: flex;
  align-items: center;
  justify-content: center;
  gap: 5px;
  width: 45px;
  height: 28px;
  border: 1px solid #c6c6c6;
  background: #fbfbfb;
}

.pane-search {
  display: flex;
  align-items: center;
  justify-content: space-between;
  height: 23px;
  margin-top: 14px;
  padding: 0 3px 0 4px;
  background: #fff;
  border: 1px solid #cfcfcf;
  color: #888;
}

.fields {
  display: flex;
  justify-content: space-between;
  height: 56px;
  margin-top: 17px;
  padding: 1px;
  overflow: hidden;
  background: #fff;
  border: 1px solid #cfcfcf;
}

.fields ul {
  list-style: none;
  margin: -8px 0 0;
  padding: 0 0 0 1px;
}

.fields li {
  display: flex;
  gap: 5px;
  height: 22px;
  line-height: 20px;
  font-weight: 700;
  font-size: 11.5px;
  letter-spacing: -0.2px;
  color: #444;
}

.drag {
  margin: 20px 0 0 3px;
  height: 18px;
  line-height: 18px;
  letter-spacing: -0.12px;
}

.areas {
  display: grid;
  grid-template-columns: 154px 160px;
  grid-template-rows: 82px 74px;
  column-gap: 9px;
  margin: 13px 0 0 2px;
}

.area h3 {
  display: flex;
  align-items: center;
  gap: 7px;
  height: 24px;
  margin: 0;
  padding-left: 3px;
  font-weight: 400;
  font-size: 11.5px;
}

.area h3 svg {
  margin-top: -3px;
}

.drop-zone {
  display: flex;
  height: 48px;
  margin-top: 2px;
  overflow: hidden;
  background: #fff;
}

.chips {
  flex: 1;
}

.chip {
  display: flex;
  align-items: center;
  justify-content: space-between;
  height: 22px;
  padding: 0 7px 0 6px;
  margin: 0 1px 3px;
  border: 1px solid #d2d2d2;
}

/* Bottom bars */
.sheet-tabs {
  display: flex;
  align-items: center;
  gap: 25px;
  height: 34px;
  flex: none;
  padding: 0 12px 0 22px;
  background: linear-gradient(90deg, #eaede4 0 943px, #efefef 943px);
}

.update {
  width: 48px;
  height: 24px;
  margin: -6px 0 0 auto;
  border: 1px solid #e6e6e6;
  background: #f1f1f1;
  color: #ccc;
}

.status {
  display: flex;
  align-items: center;
  height: 23px;
  flex: none;
  padding: 0 7px 0 10px;
  background: #f5f5f5;
  border-bottom: 1px solid #d3d1cc;
  font-size: 10.5px;
  letter-spacing: -0.2px;
}

.ready {
  width: 48px;
}

.access-text {
  margin-left: 3px;
  font-weight: 600;
}

.status svg + svg {
  margin-left: 17px;
}

.zoom {
  display: flex;
  align-items: center;
  margin-left: auto;
}

.thumb {
  width: 5px;
  height: 12px;
  background: #666;
}

.track {
  width: 49px;
  height: 1px;
  background: #888;
}

.zoom b {
  width: 26px;
  padding-left: 5px;
  font-size: 14px;
  font-weight: 400;
}

.taskbar {
  display: flex;
  align-items: center;
  height: 48px;
  flex: none;
  padding: 0 20px 2px 22px;
  background: linear-gradient(90deg, #eadfcf 0%, #e8e3b8 17%, #f0e2d2 60%, #f4e5dc 100%);
}

.weather,
.clock {
  display: flex;
  flex-direction: column;
  line-height: 16px;
}

.weather {
  margin-left: 3px;
}

.weather span:last-child {
  color: #8a8478;
}

.clock {
  margin-left: auto;
  margin-right: 9px;
  text-align: right;
  font-size: 11.5px;
}

/* Filter menu */
.menu {
  position: absolute;
  left: 677px;
  top: 236px;
  width: 267px;
  height: 370px;
  padding-right: 7px;
  border: 2px solid #999;
  border-radius: 4px 0 0 0;
  background: #fff;
}

.menu-item {
  display: flex;
  align-items: center;
  height: 29.2px;
  padding-left: 10px;
}

.menu-item:first-child {
  margin-top: -2px;
}

.menu-item.disabled {
  height: 32px;
  color: #c2c2c2;
  border-top: 1px solid #e8e8e8;
}

.menu-icon {
  width: 24px;
}

.menu-text {
  flex: 1;
}

.menu-search {
  height: 22px;
  margin: 6px 0 0 28px;
  padding-left: 5px;
  border: 1px solid #bbb;
  background: #fafafa;
  font-size: 10px;
  line-height: 19px;
  color: #999;
}

.menu-list {
  display: flex;
  justify-content: space-between;
  margin: 4px 0 0 28px;
  padding-left: 9px;
  border-left: 1px solid #e6e6e6;
}

.tree {
  padding-left: 4px;
  border-left: 1px dotted #bbb;
}

.choice {
  display: flex;
  align-items: center;
  gap: 3px;
  height: 18.6px;
}

.menu-scroll {
  width: 4px;
  height: 97px;
  margin: 17px 6px 0 0;
  background: #8a8a8a;
}

/* Overlays */
.banner {
  position: absolute;
  left: 88px;
  top: 596px;
  width: 140px;
  height: 68px;
  padding-left: 73px;
  border-bottom-left-radius: 44px 50px;
  background: linear-gradient(#e60c32, #c70b29 45%, #850416);
  color: #fff;
  font-size: 37px;
  font-weight: 700;
  line-height: 56px;
}

.arc {
  position: absolute;
  left: 1153px;
  top: 569px;
}

.contact {
  position: absolute;
  left: 189px;
  top: 592px;
  width: 980px;
  height: 128px;
  padding-top: 16px;
  background: #000;
  color: #fff;
  text-align: center;
  font-family: 'Liberation Sans', Arial, sans-serif;
  font-size: 35.3px;
}

.contact p {
  margin: 0;
  line-height: 48px;
}
</style>
